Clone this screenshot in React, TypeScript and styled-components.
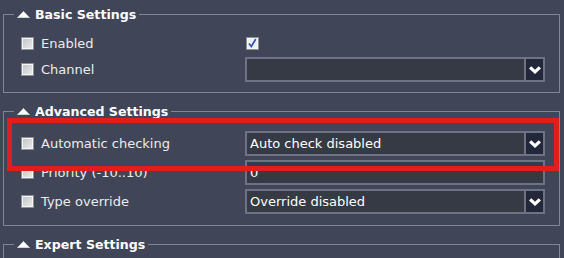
import styled, { createGlobalStyle } from 'styled-components';

const GlobalStyle = createGlobalStyle`
  html, body {
    margin: 0;
    background: #404657;
    overflow: hidden;
  }
  * {
    box-sizing: border-box;
  }
`;

const Page = styled.div`
  position: relative;
  width: 564px;
  height: 258px;
  overflow: hidden;
  padding-top: 5px;
  font-family: 'DejaVu Sans', Verdana, sans-serif;
`;

const Group = styled.fieldset<{ $bottom?: number }>`
  margin: 0 4px 9px 3px;
  padding: 0 10px ${(p) => p.$bottom ?? 10}px 10px;
  border: 1px solid #7e8597;
  min-width: 0;
`;

const Legend = styled.legend`
  display: flex;
  align-items: center;
  gap: 5px;
  height: 19px;
  padding: 0 3px;
  font: bold 12.6px 'DejaVu Sans', Verdana, sans-serif;
  color: #ffffff;
`;

const Rows = styled.div<{ $gap: number; $top: number }>`
  display: grid;
  grid-template-columns: 224px 1fr;
  grid-auto-rows: 25px;
  row-gap: ${(p) => p.$gap}px;
  padding: ${(p) => p.$top}px 4px 0 7px;
`;

const Label = styled.div`
  display: flex;
  align-items: center;
  gap: 7px;
  font-size: 13px;
  color: #ececec;
  white-space: nowrap;
`;

const Control = styled.div`
  display: flex;
  align-items: center;
`;

const Box = styled.span<{ $checked?: boolean }>`
  display: inline-flex;
  align-items: center;
  justify-content: center;
  width: 13px;
  height: 13px;
  flex: none;
  border: 1px solid #8d8f93;
  background: ${(p) =>
    p.$checked ? '#eef0f4' : 'linear-gradient(135deg, #bfc1c4 0%, #eceded 100%)'};
  box-shadow: inset 0 0 0 1px #f6f6f6;
  margin-left: ${(p) => (p.$checked ? '1px' : '0')};
`;

const Field = styled.div`
  display: flex;
  align-items: center;
  width: 100%;
  height: 25px;
  border: 2px solid #6d7385;
  background: #363a44;
  color: #ffffff;
  font-size: 13px;
`;

const FieldText = styled.span`
  flex: 1;
  padding-left: 3px;
  white-space: nowrap;
  overflow: hidden;
`;

const ArrowButton = styled.span`
  display: flex;
  align-items: center;
  justify-content: center;
  width: 19px;
  height: 100%;
  border-left: 2px solid #6d7385;
  background: #23273a;
`;

const Highlight = styled.div`
  position: absolute;
  left: 7px;
  top: 118px;
  width: 552px;
  height: 53px;
  border: 5px solid #e11d1f;
  pointer-events: none;
`;

const Spacer = styled.div`
  height: 12px;
`;

const Triangle = () => (
  <svg width="13" height="7" viewBox="0 0 13 7">
    <polygon points="6.5,0.3 12.7,6.7 0.3,6.7" fill="#ffffff" stroke="#d8d8d8" strokeWidth="0.5" />
  </svg>
);

const Check = () => (
  <svg width="11" height="11" viewBox="0 0 11 11">
    <path d="M2 5.5 L4.3 8.5 L8.8 1" fill="none" stroke="#3b55b0" strokeWidth="1.8" />
  </svg>
);

const Chevron = () => (
  <svg width="12" height="8" viewBox="0 0 12 8">
    <polygon points="0,2.5 2.3,0.3 6,3.8 9.7,0.3 12,2.5 6,8" fill="#ffffff" />
  </svg>
);

interface ISelect {
  value?: string;
}
const Select = ({ value }: ISelect) => (
  <Field>
    <FieldText>{value}</FieldText>
    <ArrowButton>
      <Chevron />
    </ArrowButton>
  </Field>
);

const CheckLabel = ({ text }: { text: string }) => (
  <Label>
    <Box />
    {text}
  </Label>
);

const App = () => {
  return (
    <Page>
      <GlobalStyle />

      <Group>
        <Legend>
          <Triangle />
          Basic Settings
        </Legend>
        <Rows $gap={1} $top={7}>
          <CheckLabel text="Enabled" />
          <Control>
            <Box $checked>
              <Check />
            </Box>
          </Control>
          <CheckLabel text="Channel" />
          <Control>
            <Select />
          </Control>
        </Rows>
      </Group>

      <Group $bottom={11}>
        <Legend>
          <Triangle />
          Advanced Settings
        </Legend>
        <Rows $gap={4} $top={10}>
          <CheckLabel text="Automatic checking" />
          <Control>
            <Select value="Auto check disabled" />
          </Control>
          <CheckLabel text="Priority (-10..10)" />
          <Control>
            <Field>
              <FieldText>0</FieldText>
            </Field>
          </Control>
          <CheckLabel text="Type override" />
          <Control>
            <Select value="Override disabled" />
          </Control>
        </Rows>
      </Group>

      <Group>
        <Legend>
          <Triangle />
          Expert Settings
        </Legend>
        <Spacer />
      </Group>

      <Highlight />
    </Page>
  );
};

export default App;
